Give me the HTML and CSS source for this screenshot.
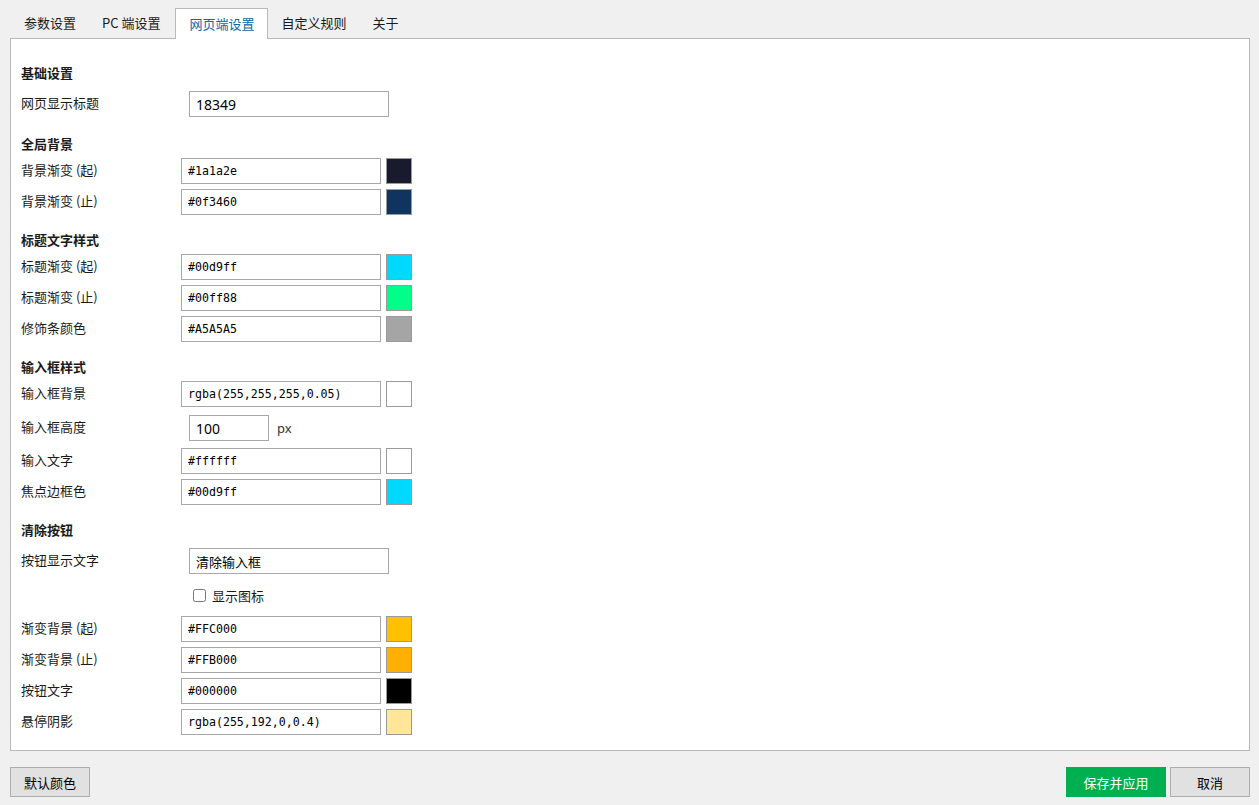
FILE: index.html
```html
<!DOCTYPE html>
<html lang="zh-CN">
<head>
    <meta charset="UTF-8">
    <title>网页端设置</title>
    <link rel="stylesheet" href="styles.css">
</head>
<body>

    <div class="tabs">
        <div class="tab">参数设置</div>
        <div class="tab">PC 端设置</div>
        <div class="tab active">网页端设置</div>
        <div class="tab">自定义规则</div>
        <div class="tab">关于</div>
    </div>

    <div class="panel">
        <div class="heading first">基础设置</div>
        <div class="row text-row">
            <label class="label wide">网页显示标题</label>
            <input class="text-input" type="text" value="18349">
        </div>

        <div class="heading">全局背景</div>
        <div class="row">
            <label class="label">背景渐变 (起)</label>
            <input class="color-input" type="text" value="#1a1a2e">
            <span class="swatch" style="background:#1a1a2e"></span>
        </div>
        <div class="row">
            <label class="label">背景渐变 (止)</label>
            <input class="color-input" type="text" value="#0f3460">
            <span class="swatch" style="background:#0f3460"></span>
        </div>

        <div class="heading">标题文字样式</div>
        <div class="row">
            <label class="label">标题渐变 (起)</label>
            <input class="color-input" type="text" value="#00d9ff">
            <span class="swatch" style="background:#00d9ff"></span>
        </div>
        <div class="row">
            <label class="label">标题渐变 (止)</label>
            <input class="color-input" type="text" value="#00ff88">
            <span class="swatch" style="background:#00ff88"></span>
        </div>
        <div class="row">
            <label class="label">修饰条颜色</label>
            <input class="color-input" type="text" value="#A5A5A5">
            <span class="swatch" style="background:#a5a5a5"></span>
        </div>

        <div class="heading">输入框样式</div>
        <div class="row">
            <label class="label">输入框背景</label>
            <input class="color-input" type="text" value="rgba(255,255,255,0.05)">
            <span class="swatch" style="background:#ffffff"></span>
        </div>
        <div class="row num-row">
            <label class="label wide">输入框高度</label>
            <input class="text-input short" type="text" value="100">
            <span class="unit">px</span>
        </div>
        <div class="row">
            <label class="label">输入文字</label>
            <input class="color-input" type="text" value="#ffffff">
            <span class="swatch" style="background:#ffffff"></span>
        </div>
        <div class="row">
            <label class="label">焦点边框色</label>
            <input class="color-input" type="text" value="#00d9ff">
            <span class="swatch" style="background:#00d9ff"></span>
        </div>

        <div class="heading">清除按钮</div>
        <div class="row text-row">
            <label class="label wide">按钮显示文字</label>
            <input class="text-input cjk" type="text" value="清除输入框">
        </div>
        <div class="check-row">
            <input type="checkbox" id="showIcon">
            <label for="showIcon">显示图标</label>
        </div>
        <div class="row">
            <label class="label">渐变背景 (起)</label>
            <input class="color-input" type="text" value="#FFC000">
            <span class="swatch" style="background:#ffc000"></span>
        </div>
        <div class="row">
            <label class="label">渐变背景 (止)</label>
            <input class="color-input" type="text" value="#FFB000">
            <span class="swatch" style="background:#ffb000"></span>
        </div>
        <div class="row">
            <label class="label">按钮文字</label>
            <input class="color-input" type="text" value="#000000">
            <span class="swatch" style="background:#000000"></span>
        </div>
        <div class="row">
            <label class="label">悬停阴影</label>
            <input class="color-input" type="text" value="rgba(255,192,0,0.4)">
            <span class="swatch" style="background:#ffe699"></span>
        </div>
    </div>

    <div class="footer">
        <button class="btn" type="button">默认颜色</button>
        <div class="footer-right">
            <button class="btn primary" type="button">保存并应用</button>
            <button class="btn" type="button">取消</button>
        </div>
    </div>

</body>
</html>
```

FILE: styles.css
```css
body {
    margin: 0;
    padding: 8px 9px 0 10px;
    background: #f0f0f0;
    font-family: "Noto Sans CJK SC", "Noto Sans", sans-serif;
    font-size: 13px;
    color: #1a1a1a;
    height: 805px;
    box-sizing: border-box;
}

/* tab strip */
.tabs {
    display: flex;
    align-items: flex-start;
    height: 30px;
    padding-left: 1px;
}

.tab {
    height: 30px;
    line-height: 30px;
    padding: 0 13px;
    box-sizing: border-box;
    white-space: nowrap;
}

.tab:nth-child(2) {
    padding: 0 15px 0 13px;
}

.tab.active {
    height: 31px;
    line-height: 29px;
    padding: 0 13px;
    background: #fff;
    border: 1px solid #b9b9b9;
    border-bottom: none;
    color: #0b68a6;
    position: relative;
    z-index: 1;
}

/* main white panel */
.panel {
    background: #fff;
    border: 1px solid #b9b9b9;
    padding: 24px 10px 15px 10px;
}

.heading {
    height: 20px;
    line-height: 20px;
    font-weight: bold;
    margin-top: 15px;
}

.heading.first {
    margin-top: 0;
}

.row {
    display: flex;
    align-items: center;
    height: 26px;
    margin-top: 5px;
}

.heading + .row {
    margin-top: 4px;
}

.text-row {
    height: 26px;
    padding: 4px 0 2px;
}

.num-row {
    padding: 3px 0 2px;
}

.label {
    width: 160px;
    flex: none;
    line-height: 24px;
    margin-bottom: 2px;
}

.label.wide {
    width: 168px;
}

input[type="text"] {
    height: 26px;
    box-sizing: border-box;
    border: 1px solid #a8a8a8;
    background: #fff;
    margin: 0;
    outline: none;
    color: #000;
}

.color-input {
    width: 200px;
    padding: 0 6px;
    font-family: "DejaVu Sans Mono", monospace;
    font-size: 11.6px;
}

.text-input {
    width: 200px;
    padding: 0 6px;
    font-family: "Noto Sans", "Noto Sans CJK SC", sans-serif;
    font-size: 14px;
}

.text-input.short {
    width: 80px;
}

.text-input.cjk {
    font-size: 13px;
    font-family: "Noto Sans CJK SC", sans-serif;
}

.unit {
    margin-left: 8px;
    font-family: "Noto Sans", sans-serif;
    color: #333;
}

.swatch {
    width: 26px;
    height: 26px;
    box-sizing: border-box;
    border: 1px solid #9a9a9a;
    margin-left: 5px;
}

.check-row {
    display: flex;
    align-items: center;
    height: 34px;
    margin: 2px 0 -1px;
    padding-left: 172px;
}

.check-row input {
    width: 13px;
    height: 13px;
    margin: 0 6px 0 0;
}

/* bottom buttons */
.footer {
    display: flex;
    justify-content: space-between;
    margin-top: 16px;
}

.footer-right {
    display: flex;
    gap: 4px;
}

.btn {
    width: 80px;
    height: 30px;
    font-family: "Noto Sans CJK SC", sans-serif;
    font-size: 13px;
    background: #e1e1e1;
    border: 1px solid #adadad;
    color: #000;
    padding: 0;
}

.btn.primary {
    width: 100px;
    background: #00b050;
    border-color: #00b050;
    color: #fff;
}
```
